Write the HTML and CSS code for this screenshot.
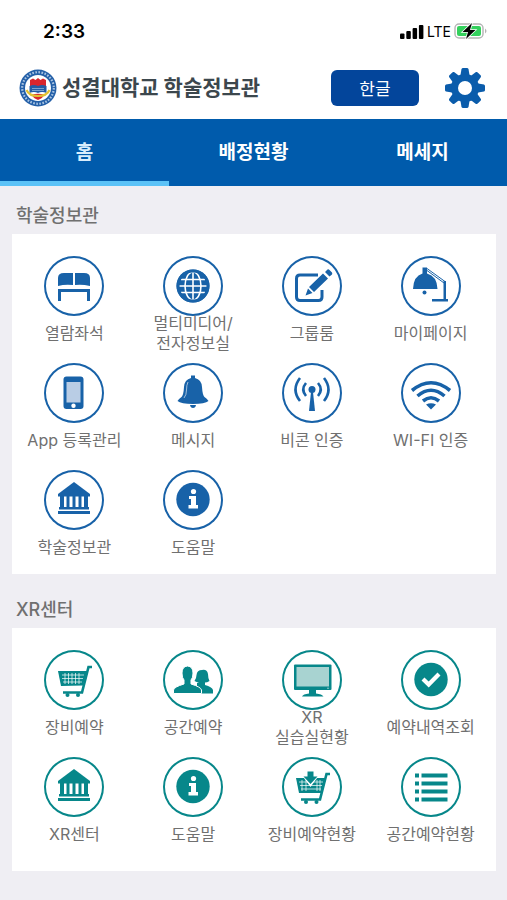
FILE: index.html
```
<!DOCTYPE html>
<html lang="ko">
<head>
    <meta charset="UTF-8">
    <meta name="viewport" content="width=device-width, initial-scale=1.0">
    <title>성결대학교 학술정보관</title>
    <link rel="stylesheet" href="styles.css">
</head>
<body>
    <!-- Icons that are used by the menu tiles -->
    <svg class="icon-defs" aria-hidden="true">
        <symbol id="icon-desk" viewBox="0 0 60 60">
            <path d="M14 30V22Q14 17 20 17H29V29Q21 28 14 30ZM31 17H40Q46 17 46 22V30Q38 28 31 29Z"/>
            <path d="M14 33H46V45H43V36H17V45H14Z"/>
        </symbol>
        <symbol id="icon-globe" viewBox="0 0 60 60">
            <circle cx="30" cy="30" r="16.5"/>
            <g fill="none" stroke="#fff" stroke-width="1.6">
                <path d="M30 16V44M16 30H44M18 23.5H42M18 36.5H42"/>
                <ellipse cx="30" cy="30" rx="8" ry="14"/>
            </g>
            <circle cx="30" cy="30" r="15" fill="none" stroke="currentColor" stroke-width="3"/>
        </symbol>
        <symbol id="icon-edit" viewBox="0 0 60 60">
            <path d="M36 19H18Q14.500 19 14.500 22.500V41Q14.500 44.500 18 44.500H36.500Q40 44.500 40 41V34" fill="none" stroke="currentColor" stroke-width="3"/>
            <path d="M23.500 39.500L26 32.500L30.500 37ZM27 31L41 17.500L46 22.500L32 36ZM43 16L45.500 13.500Q46.500 13 47.500 14L50 16.500Q50.500 17.500 50 18.500L47.500 20.500Z"/>
        </symbol>
        <symbol id="icon-lamp" viewBox="0 0 60 60">
            <path d="M21.500 11.500H26V17.500Q36 20 36.500 33H12Q12.500 20 21.500 17.500Z"/>
            <circle cx="23.500" cy="36.500" r="2"/>
            <path d="M26 12.500L44 25.500M26 14.500L43 27" fill="none" stroke="currentColor" stroke-width="1"/>
            <path d="M42.500 25H45V43H47V45.500H31V43H42.500Z"/>
        </symbol>
        <symbol id="icon-phone" viewBox="0 0 60 60">
            <rect x="19.5" y="13.5" width="20" height="32.5" rx="3"/>
            <rect x="22.5" y="19" width="14" height="20.5" fill="#b9cde5"/>
            <circle cx="29.5" cy="42.7" r="2.2" fill="#fff"/>
        </symbol>
        <symbol id="icon-bell" viewBox="0 0 60 60">
            <path d="M28 12.500H32V15Q38.500 16.500 39 24Q39.500 32 41.500 34Q45 36.500 45.500 38Q42 41 30 41Q18 41 14.500 38Q15 36.500 18.500 34Q20.500 32 21 24Q21.500 16.500 28 15Z"/>
            <path d="M27 42H33Q32.500 45 30 45Q27.500 45 27 42Z"/>
            <path d="M25 19Q23.500 22 23.500 27T21 35" fill="none" stroke="#fff" stroke-width=".6"/>
        </symbol>
        <symbol id="icon-beacon" viewBox="0 0 60 60">
            <circle cx="30" cy="26.5" r="3.5"/>
            <path d="M29 29H31L33 48H27Z"/>
            <path d="M24 20Q18.500 26.500 24 33M36 20Q41.500 26.500 36 33M18 15Q9 26.500 18 38M42 15Q51 26.500 42 38" fill="none" stroke="currentColor" stroke-width="2.6"/>
        </symbol>
        <symbol id="icon-wifi" viewBox="0 0 60 60">
            <path d="M11 27.500Q30 12 49 27.500M16.500 33Q30 21.500 43.500 33M22 38Q30 31.500 38 38" fill="none" stroke="currentColor" stroke-width="3.6"/>
            <path d="M25 41.500Q30 39 35 41.500L30 46.500Z"/>
        </symbol>
        <symbol id="icon-bank" viewBox="0 0 60 60">
            <path d="M30 12L46 24V26.500H14V24Z"/>
            <path d="M16 26H20V38H16ZM22.500 26H25.500V38H22.500ZM28.500 26H31.500V38H28.500ZM34.500 26H37.500V38H34.500ZM40 26H44V38H40Z"/>
            <path d="M15 37H45V39.500H15ZM14 41H46V44H14Z"/>
        </symbol>
        <symbol id="icon-info" viewBox="0 0 60 60">
            <circle cx="30" cy="29.5" r="16.7"/>
            <circle cx="30.5" cy="21.5" r="2.6" fill="#fff"/>
            <path d="M26 26H33V35H35V38.500H25.500V35H28V29H26Z" fill="#fff"/>
        </symbol>
        <symbol id="icon-cart" viewBox="0 0 60 60">
            <path d="M14 21H43L39 35.500L17 36Z"/>
            <path d="M18 25H40M18 28.500H39M19 32H38M21 23V34M24.500 23V34M28 23V34M31.500 23V34M35 23V34" fill="none" stroke="#fff" stroke-width=".7"/>
            <path d="M48 17H44.500L38 42.500H19" fill="none" stroke="currentColor" stroke-width="2.6"/>
            <circle cx="23.5" cy="45" r="2"/>
            <circle cx="34" cy="45" r="2"/>
        </symbol>
        <symbol id="icon-people" viewBox="0 0 60 60">
            <path d="M39 20Q44 19 45 24Q45 28 46.500 31Q44 32.500 42 32.500V35Q49 37 50 40V43.500H34V33L36 32.500Q33.500 32 31.500 31Q33.500 28 33.500 25Q34 20 39 20Z"/>
            <path d="M24.500 16Q30 16.500 30 23Q30 28 28 30V34Q38 37 38.500 40V43.500H10.500V40Q11 37 21 34V30Q19 28 19 23Q19 16.500 24.500 16Z" stroke="#fff" stroke-width="1"/>
        </symbol>
        <symbol id="icon-monitor" viewBox="0 0 60 60">
            <rect x="12" y="14.5" width="37.5" height="25.5" rx="1"/>
            <rect x="14.5" y="17" width="32.5" height="19.5" fill="#a8d3d1"/>
            <path d="M27 40H34V43.500Q40 44 41.500 46.500H20Q21 44 27 43.500Z"/>
            <circle cx="46" cy="38.2" r=".6" fill="#fff"/>
        </symbol>
        <symbol id="icon-check" viewBox="0 0 60 60">
            <circle cx="30" cy="29.5" r="16.7"/>
            <path d="M22 29L27.700 34.500L38 24" fill="none" stroke="#fff" stroke-width="4.2"/>
        </symbol>
        <symbol id="icon-cart-add" viewBox="0 0 60 60">
            <path d="M14 21H43L39 36H17Z"/>
            <path d="M17 25H41M18 28.500H40M19 32H39M20 23V34M24 23V34M35 23V34M38 23V34" fill="none" stroke="#fff" stroke-width=".7"/>
            <path d="M48 17H44.500L38 42.500H19" fill="none" stroke="currentColor" stroke-width="2.6"/>
            <circle cx="24" cy="45" r="2"/>
            <circle cx="34.5" cy="45" r="2"/>
            <path d="M19 17H38L28.500 30Z" fill="#fff"/>
            <path d="M25.500 14.500H31.500V19.500H35.500L28.500 27L21.500 19.500H25.500Z"/>
        </symbol>
        <symbol id="icon-list" viewBox="0 0 60 60">
            <path d="M14 16.500H18V20.500H14ZM20.500 16.500H46.500V20.500H20.500ZM14 24.500H18V28.500H14ZM20.500 24.500H46.500V28.500H20.500ZM14 32.500H18V36.500H14ZM20.500 32.500H46.500V36.500H20.500ZM14 40.500H18V44.500H14ZM20.500 40.500H46.500V44.500H20.500Z"/>
        </symbol>
    </svg>

    <div class="status-bar">
        <span class="time">2:33</span>
        <div class="status-icons">
            <svg width="24" height="15" viewBox="0 0 24 15" aria-hidden="true">
                <rect x="0" y="9.5" width="4.5" height="5.5" rx="1"/>
                <rect x="6.3" y="7" width="4.5" height="8" rx="1"/>
                <rect x="12.6" y="4" width="4.5" height="11" rx="1"/>
                <rect x="18.9" y="1" width="4.5" height="14" rx="1"/>
            </svg>
            <span class="network">LTE</span>
            <svg width="34" height="18" viewBox="0 0 34 18" aria-hidden="true">
                <rect x="1" y="2" width="28" height="14" rx="4" fill="#fff" stroke="#b4b4b4" stroke-width="1.4"/>
                <rect x="3" y="4" width="24" height="10" rx="2" fill="#34d15d"/>
                <path d="M31 6.500Q34 9 31 11.500Z" fill="#b4b4b4"/>
                <path d="M18 1L8.500 10H14L12 17L21.500 8H16Z" stroke="#fff" stroke-width="1.5" paint-order="stroke"/>
            </svg>
        </div>
    </div>

    <header class="header">
        <h1 class="brand">
            <svg class="crest" viewBox="0 0 38 38" aria-hidden="true">
                <circle cx="19" cy="19" r="18.5" fill="#2460a8"/>
                <circle cx="19" cy="19" r="15.8" fill="none" stroke="#a9c4e2" stroke-width="2.2" stroke-dasharray="1.6 1.5"/>
                <circle cx="19" cy="19" r="13" fill="#fff"/>
                <path d="M11 11L14 9.500L16.500 11L19 9L21.500 11L24 9.500L27 11V17H11Z" fill="#d9262e"/>
                <path d="M10.500 17Q15 15 19 17Q23 15 27.500 17V24Q23 22 19 24Q15 22 10.500 24Z" fill="#245ca5"/>
                <path d="M13 19.500H25M13 21.500H25" stroke="#8fb2d9" stroke-width=".8"/>
                <path d="M12.500 25.500Q19 24 25.500 25.500Q23.500 29.500 19 31Q14.500 29.500 12.500 25.500Z" fill="#d9262e"/>
                <path d="M7.500 21Q10 27 19 27Q28 27 30.500 21" fill="none" stroke="#e2c334" stroke-width="2.2"/>
            </svg>
            <span>성결대학교 학술정보관</span>
        </h1>
        <button class="lang-button" type="button">한글</button>
        <button class="settings-button" type="button" aria-label="설정">
            <svg width="42" height="42" viewBox="-21 -21 42 42" aria-hidden="true">
                <g fill="#0a5cab">
                    <g id="teeth">
                        <path id="tooth" d="M-4.500 -13L-3.500 -19Q-3 -20 -2 -20H2Q3 -20 3.500 -19L4.500 -13V13L3.500 19Q3 20 2 20H-2Q-3 20 -3.500 19L-4.500 13Z"/>
                        <use href="#tooth" transform="rotate(90)"/>
                    </g>
                    <use href="#teeth" transform="rotate(45)"/>
                    <circle r="14"/>
                </g>
                <circle r="7" fill="#fff"/>
            </svg>
        </button>
    </header>

    <nav class="tabs">
        <a class="tab active" href="#home">홈</a>
        <a class="tab" href="#seats">배정현황</a>
        <a class="tab" href="#messages">메세지</a>
    </nav>

    <main class="content">
        <section class="section library">
            <h2>학술정보관</h2>
            <div class="panel">
                <a class="tile" href="#"><svg class="icon"><use href="#icon-desk"/></svg><span class="label">열람좌석</span></a>
                <a class="tile" href="#"><svg class="icon"><use href="#icon-globe"/></svg><span class="label">멀티미디어/<br>전자정보실</span></a>
                <a class="tile" href="#"><svg class="icon"><use href="#icon-edit"/></svg><span class="label">그룹룸</span></a>
                <a class="tile" href="#"><svg class="icon"><use href="#icon-lamp"/></svg><span class="label">마이페이지</span></a>
                <a class="tile" href="#"><svg class="icon"><use href="#icon-phone"/></svg><span class="label">App 등록관리</span></a>
                <a class="tile" href="#"><svg class="icon"><use href="#icon-bell"/></svg><span class="label">메시지</span></a>
                <a class="tile" href="#"><svg class="icon"><use href="#icon-beacon"/></svg><span class="label">비콘 인증</span></a>
                <a class="tile" href="#"><svg class="icon"><use href="#icon-wifi"/></svg><span class="label">WI-FI 인증</span></a>
                <a class="tile" href="#"><svg class="icon"><use href="#icon-bank"/></svg><span class="label">학술정보관</span></a>
                <a class="tile" href="#"><svg class="icon"><use href="#icon-info"/></svg><span class="label">도움말</span></a>
            </div>
        </section>

        <section class="section xr">
            <h2>XR센터</h2>
            <div class="panel">
                <a class="tile" href="#"><svg class="icon"><use href="#icon-cart"/></svg><span class="label">장비예약</span></a>
                <a class="tile" href="#"><svg class="icon"><use href="#icon-people"/></svg><span class="label">공간예약</span></a>
                <a class="tile" href="#"><svg class="icon"><use href="#icon-monitor"/></svg><span class="label">XR<br>실습실현황</span></a>
                <a class="tile" href="#"><svg class="icon"><use href="#icon-check"/></svg><span class="label">예약내역조회</span></a>
                <a class="tile" href="#"><svg class="icon"><use href="#icon-bank"/></svg><span class="label">XR센터</span></a>
                <a class="tile" href="#"><svg class="icon"><use href="#icon-info"/></svg><span class="label">도움말</span></a>
                <a class="tile" href="#"><svg class="icon"><use href="#icon-cart-add"/></svg><span class="label">장비예약현황</span></a>
                <a class="tile" href="#"><svg class="icon"><use href="#icon-list"/></svg><span class="label">공간예약현황</span></a>
            </div>
        </section>
    </main>
</body>
</html>
```
FILE: styles.css
```
* {
    box-sizing: border-box;
}

body {
    font-family: Inter, 'Noto Sans CJK KR', sans-serif;
    background: #efeef3;
    margin: 0;
    min-height: 100vh;
    color: #707070;
}

a {
    color: inherit;
    text-decoration: none;
}

button {
    border: none;
    padding: 0;
    font-family: inherit;
    cursor: pointer;
}

.icon-defs {
    display: none;
}

/* Status bar */
.status-bar {
    display: flex;
    justify-content: space-between;
    align-items: center;
    height: 62px;
    padding: 0 19px 0 43px;
    background: #fff;
    color: #000;
}

.time {
    font-size: 19px;
    font-weight: 600;
}

.status-icons {
    display: flex;
    align-items: center;
    gap: 3px;
}

.network {
    font-size: 14px;
}

/* Header */
.header {
    display: flex;
    align-items: center;
    height: 57px;
    padding: 0 21px 6px 19px;
    background: #fff;
}

.brand {
    display: flex;
    align-items: center;
    gap: 5px;
    margin: 0 auto 0 0;
    font-size: 21px;
    line-height: 30px;
    color: #3c474d;
    white-space: nowrap;
}

.crest {
    width: 38px;
    height: 38px;
}

.lang-button {
    width: 88px;
    height: 36px;
    border-radius: 6px;
    background: #03459b;
    color: #fff;
    font-size: 17px;
}

.settings-button {
    display: flex;
    margin-left: 25px;
    background: none;
}

/* Tabs */
.tabs {
    display: grid;
    grid-template-columns: repeat(3, 1fr);
    background: #005bac;
}

.tab {
    height: 67px;
    border-bottom: 5px solid transparent;
    color: #fff;
    font-size: 19px;
    font-weight: bold;
    line-height: 68px;
    text-align: center;
}

.tab.active {
    border-color: #5bc2f7;
    color: #d8edfc;
}

/* Menu sections */
.content {
    padding: 10px 11px 28px 12px;
}

.section + .section {
    margin-top: 16px;
}

h2 {
    height: 38px;
    margin: 0;
    padding-left: 4px;
    font-size: 18px;
    font-weight: 500;
    line-height: 40px;
}

.panel {
    display: grid;
    grid-template-columns: repeat(4, 1fr);
    padding: 19px 6px 0 3px;
    background: #fff;
}

.tile {
    display: flex;
    flex-direction: column;
    align-items: center;
    height: 107px;
    padding-top: 3px;
}

.icon {
    width: 60px;
    height: 60px;
    flex-shrink: 0;
    border-radius: 50%;
    box-shadow: inset 0 0 0 2px currentColor;
    fill: currentColor;
}

.library .icon {
    color: #1862a8;
}

.xr .icon {
    color: #07878a;
}

.xr .panel {
    padding-bottom: 10px;
}

.label {
    display: flex;
    flex-direction: column;
    justify-content: center;
    height: 40px;
    margin-top: -3px;
    font-size: 16px;
    line-height: 20px;
    text-align: center;
    white-space: nowrap;
}
```
